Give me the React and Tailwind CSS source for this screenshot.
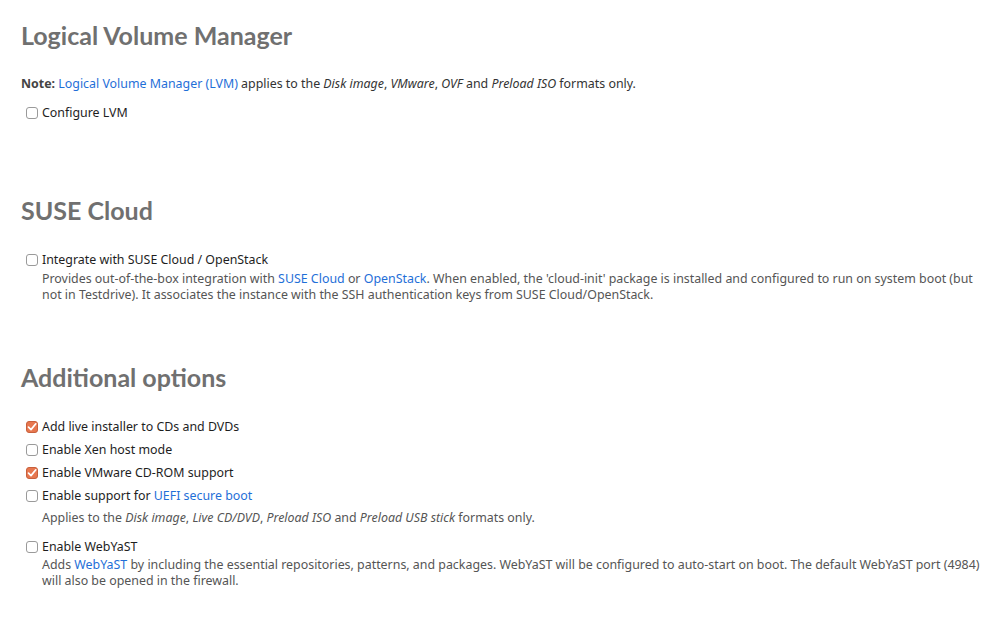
import React from 'react';

const Box = ({ checked }) =>
  checked ? (
    <span className="mt-[2px] flex h-[12px] w-[12px] shrink-0 items-center justify-center rounded-[3px] border border-[#c8603c] bg-[#e7774f]">
      <svg width="10" height="10" viewBox="0 0 10 10">
        <path d="M1.5 5.2 L4 7.6 L8.8 1.8" stroke="#fff" strokeWidth="1.7" fill="none" strokeLinecap="round" strokeLinejoin="round" />
      </svg>
    </span>
  ) : (
    <span className="mt-[2px] h-[12px] w-[12px] shrink-0 rounded-[3px] border border-[#9a9a9a] bg-white"></span>
  );

const Option = ({ checked, label, children, className = '', descPad = 'pt-[3px]' }) => (
  <div className={`pl-[5px] ${className}`}>
    <div className="flex items-start gap-[4px] text-[#1e1e1e]">
      <Box checked={checked} />
      <span>{label}</span>
    </div>
    {children && <div className={`pl-[16px] text-[#555] ${descPad}`}>{children}</div>}
  </div>
);

const A = ({ children }) => <span className="text-[#1f6fd8]">{children}</span>;

const Heading = ({ children, className = '' }) => (
  <h2 className={`text-[25px] leading-[32px] font-bold text-[#707070] ${className}`} style={{ fontFamily: 'Lato, sans-serif' }}>
    {children}
  </h2>
);

export default function App() {
  return (
    <div className="bg-white min-h-[625px] pl-[21px] pr-[6px] pt-[19px] text-[12.4px] leading-[16px]" style={{ fontFamily: '"Noto Sans", "Open Sans", sans-serif' }}>
      <Heading>Logical Volume Manager</Heading>
      <p className="mt-[25px] text-[#333]">
        <b className="text-[#444]">Note:</b> <A>Logical Volume Manager (LVM)</A> applies to the <i>Disk image</i>, <i>VMware</i>, <i>OVF</i> and <i>Preload ISO</i> formats only.
      </p>
      <Option className="mt-[13px]" label="Configure LVM" />

      <Heading className="mt-[73px]">SUSE Cloud</Heading>
      <Option className="mt-[26px]" label="Integrate with SUSE Cloud / OpenStack">
        Provides out-of-the-box integration with <A>SUSE Cloud</A> or <A>OpenStack</A>. When enabled, the 'cloud-init' package is installed and configured to run on system boot (but not in Testdrive). It associates the instance with the SSH authentication keys from SUSE Cloud/OpenStack.
      </Option>

      <Heading className="mt-[58px]">Additional options</Heading>
      <div className="mt-[26px] flex flex-col gap-[7px]">
        <Option checked label="Add live installer to CDs and DVDs" />
        <Option label="Enable Xen host mode" />
        <Option checked label="Enable VMware CD-ROM support" />
        <Option label={<>Enable support for <A>UEFI secure boot</A></>} descPad="pt-[6px]">
          Applies to the <i>Disk image</i>, <i>Live CD/DVD</i>, <i>Preload ISO</i> and <i>Preload USB stick</i> formats only.
        </Option>
        <Option className="mt-[6px]" label="Enable WebYaST" descPad="pt-[2px]">
          Adds <A>WebYaST</A> by including the essential repositories, patterns, and packages. WebYaST will be configured to auto-start on boot. The default WebYaST port (4984) will also be opened in the firewall.
        </Option>
      </div>
    </div>
  );
}
